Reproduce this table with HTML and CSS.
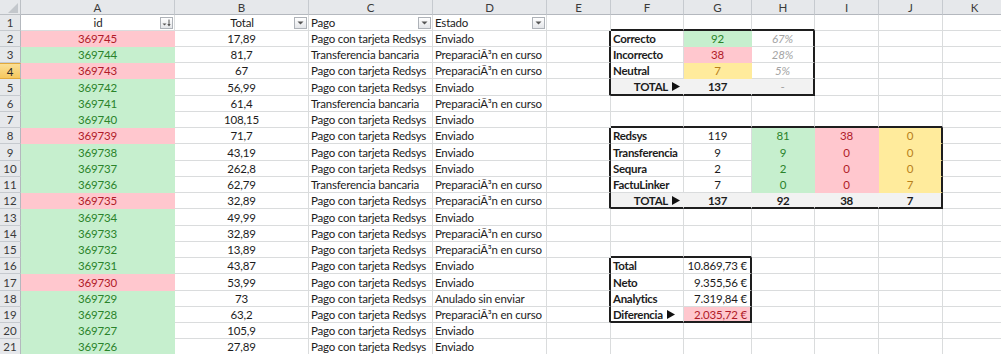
FILE: index.html
```html
<!DOCTYPE html>
<html lang="es">
<head>
<meta charset="utf-8">
<title>Hoja de pedidos</title>
<link rel="stylesheet" href="styles.css">
</head>
<body>
<div class="sheet">
  <!-- column headers -->
  <div class="c corner"><svg width="10" height="10" viewBox="0 0 10 10"><path d="M10 0V10H0Z" fill="#c3c7cc"/></svg></div>
  <div class="c ch">A</div><div class="c ch">B</div><div class="c ch">C</div><div class="c ch">D</div><div class="c ch">E</div><div class="c ch">F</div><div class="c ch">G</div><div class="c ch">H</div><div class="c ch">I</div><div class="c ch">J</div><div class="c ch">K</div>

  <!-- row 1 -->
  <div class="c rh">1</div>
  <div class="c hd"><span class="sp"></span><span class="ht">id</span><span class="fb"><svg width="11" height="10" viewBox="0 0 11 10"><path d="M1.5 5.5h4l-2 2z" fill="#555"/><path d="M8 1.5v6" stroke="#555" stroke-width="1"/><path d="M6.3 6h3.4L8 8.5z" fill="#555"/></svg></span></div>
  <div class="c hd"><span class="sp"></span><span class="ht">Total</span><span class="fb"><svg width="7" height="4" viewBox="0 0 7 4"><path d="M0.5 0.5h6L3.5 3.5z" fill="#555"/></svg></span></div>
  <div class="c hd hl"><span class="ht">Pago</span><span class="fb"><svg width="7" height="4" viewBox="0 0 7 4"><path d="M0.5 0.5h6L3.5 3.5z" fill="#555"/></svg></span></div>
  <div class="c hd hl"><span class="ht">Estado</span><span class="fb"><svg width="7" height="4" viewBox="0 0 7 4"><path d="M0.5 0.5h6L3.5 3.5z" fill="#555"/></svg></span></div>
  <div class="c"></div><div class="c xb"></div><div class="c xb"></div><div class="c xb"></div><div class="c"></div><div class="c"></div><div class="c"></div>

  <!-- row 2 -->
  <div class="c rh">2</div>
  <div class="c ctr red">369745</div><div class="c ctr">17,89</div><div class="c">Pago con tarjeta Redsys</div><div class="c">Enviado</div>
  <div class="c xr"></div><div class="c b">Correcto</div><div class="c ctr grn">92</div><div class="c ctr pct xr">67%</div><div class="c"></div><div class="c"></div><div class="c"></div>

  <!-- row 3 -->
  <div class="c rh">3</div>
  <div class="c ctr grn">369744</div><div class="c ctr">81,7</div><div class="c">Transferencia bancaria</div><div class="c">PreparaciÃ³n en curso</div>
  <div class="c xr"></div><div class="c b">Incorrecto</div><div class="c ctr red">38</div><div class="c ctr pct xr">28%</div><div class="c"></div><div class="c"></div><div class="c"></div>

  <!-- row 4 -->
  <div class="c rh sel">4</div>
  <div class="c ctr red">369743</div><div class="c ctr">67</div><div class="c">Pago con tarjeta Redsys</div><div class="c">PreparaciÃ³n en curso</div>
  <div class="c xr"></div><div class="c b">Neutral</div><div class="c ctr yel">7</div><div class="c ctr pct xr">5%</div><div class="c"></div><div class="c"></div><div class="c"></div>

  <!-- row 5 -->
  <div class="c rh">5</div>
  <div class="c ctr grn">369742</div><div class="c ctr">56,99</div><div class="c">Pago con tarjeta Redsys</div><div class="c">Enviado</div>
  <div class="c xr"></div><div class="c tot rt b xb">TOTAL<svg class="arr" width="8" height="9" viewBox="0 0 8 9"><path d="M0 0L8 4.5L0 9Z" fill="#111"/></svg></div><div class="c tot ctr b xb">137</div><div class="c tot ctr dash xb xr">-</div><div class="c"></div><div class="c"></div><div class="c"></div>

  <!-- row 6 -->
  <div class="c rh">6</div>
  <div class="c ctr grn">369741</div><div class="c ctr">61,4</div><div class="c">Transferencia bancaria</div><div class="c">PreparaciÃ³n en curso</div>
  <div class="c"></div><div class="c"></div><div class="c"></div><div class="c"></div><div class="c"></div><div class="c"></div><div class="c"></div>

  <!-- row 7 -->
  <div class="c rh">7</div>
  <div class="c ctr grn">369740</div><div class="c ctr">108,15</div><div class="c">Pago con tarjeta Redsys</div><div class="c">Enviado</div>
  <div class="c"></div><div class="c xb"></div><div class="c xb"></div><div class="c xb"></div><div class="c xb"></div><div class="c xb"></div><div class="c"></div>

  <!-- row 8 -->
  <div class="c rh">8</div>
  <div class="c ctr red">369739</div><div class="c ctr">71,7</div><div class="c">Pago con tarjeta Redsys</div><div class="c">Enviado</div>
  <div class="c xr"></div><div class="c b">Redsys</div><div class="c ctr">119</div><div class="c ctr grn">81</div><div class="c ctr red">38</div><div class="c ctr yel xr">0</div><div class="c"></div>

  <!-- row 9 -->
  <div class="c rh">9</div>
  <div class="c ctr grn">369738</div><div class="c ctr">43,19</div><div class="c">Pago con tarjeta Redsys</div><div class="c">Enviado</div>
  <div class="c xr"></div><div class="c b">Transferencia</div><div class="c ctr">9</div><div class="c ctr grn">9</div><div class="c ctr red">0</div><div class="c ctr yel xr">0</div><div class="c"></div>

  <!-- row 10 -->
  <div class="c rh">10</div>
  <div class="c ctr grn">369737</div><div class="c ctr">262,8</div><div class="c">Pago con tarjeta Redsys</div><div class="c">Enviado</div>
  <div class="c xr"></div><div class="c b">Sequra</div><div class="c ctr">2</div><div class="c ctr grn">2</div><div class="c ctr red">0</div><div class="c ctr yel xr">0</div><div class="c"></div>

  <!-- row 11 -->
  <div class="c rh">11</div>
  <div class="c ctr grn">369736</div><div class="c ctr">62,79</div><div class="c">Transferencia bancaria</div><div class="c">PreparaciÃ³n en curso</div>
  <div class="c xr"></div><div class="c b">FactuLinker</div><div class="c ctr">7</div><div class="c ctr grn">0</div><div class="c ctr red">0</div><div class="c ctr yel xr">7</div><div class="c"></div>

  <!-- row 12 -->
  <div class="c rh">12</div>
  <div class="c ctr red">369735</div><div class="c ctr">32,89</div><div class="c">Pago con tarjeta Redsys</div><div class="c">PreparaciÃ³n en curso</div>
  <div class="c xr"></div><div class="c tot rt b xb">TOTAL<svg class="arr" width="8" height="9" viewBox="0 0 8 9"><path d="M0 0L8 4.5L0 9Z" fill="#111"/></svg></div><div class="c tot ctr b xb">137</div><div class="c tot ctr b xb">92</div><div class="c tot ctr b xb">38</div><div class="c tot ctr b xb xr">7</div><div class="c"></div>

  <!-- row 13 -->
  <div class="c rh">13</div>
  <div class="c ctr grn">369734</div><div class="c ctr">49,99</div><div class="c">Pago con tarjeta Redsys</div><div class="c">Enviado</div>
  <div class="c"></div><div class="c"></div><div class="c"></div><div class="c"></div><div class="c"></div><div class="c"></div><div class="c"></div>

  <!-- row 14 -->
  <div class="c rh">14</div>
  <div class="c ctr grn">369733</div><div class="c ctr">32,89</div><div class="c">Pago con tarjeta Redsys</div><div class="c">PreparaciÃ³n en curso</div>
  <div class="c"></div><div class="c"></div><div class="c"></div><div class="c"></div><div class="c"></div><div class="c"></div><div class="c"></div>

  <!-- row 15 -->
  <div class="c rh">15</div>
  <div class="c ctr grn">369732</div><div class="c ctr">13,89</div><div class="c">Pago con tarjeta Redsys</div><div class="c">PreparaciÃ³n en curso</div>
  <div class="c"></div><div class="c xb"></div><div class="c xb"></div><div class="c"></div><div class="c"></div><div class="c"></div><div class="c"></div>

  <!-- row 16 -->
  <div class="c rh">16</div>
  <div class="c ctr grn">369731</div><div class="c ctr">43,87</div><div class="c">Pago con tarjeta Redsys</div><div class="c">Enviado</div>
  <div class="c xr"></div><div class="c b">Total</div><div class="c rt xr">10.869,73 €</div><div class="c"></div><div class="c"></div><div class="c"></div><div class="c"></div>

  <!-- row 17 -->
  <div class="c rh">17</div>
  <div class="c ctr red">369730</div><div class="c ctr">53,99</div><div class="c">Pago con tarjeta Redsys</div><div class="c">Enviado</div>
  <div class="c xr"></div><div class="c b">Neto</div><div class="c rt xr">9.355,56 €</div><div class="c"></div><div class="c"></div><div class="c"></div><div class="c"></div>

  <!-- row 18 -->
  <div class="c rh">18</div>
  <div class="c ctr grn">369729</div><div class="c ctr">73</div><div class="c">Pago con tarjeta Redsys</div><div class="c">Anulado sin enviar</div>
  <div class="c xr"></div><div class="c b">Analytics</div><div class="c rt xr">7.319,84 €</div><div class="c"></div><div class="c"></div><div class="c"></div><div class="c"></div>

  <!-- row 19 -->
  <div class="c rh">19</div>
  <div class="c ctr grn">369728</div><div class="c ctr">63,2</div><div class="c">Pago con tarjeta Redsys</div><div class="c">PreparaciÃ³n en curso</div>
  <div class="c xr"></div><div class="c b xb">Diferencia<svg class="arr" width="8" height="9" viewBox="0 0 8 9"><path d="M0 0L8 4.5L0 9Z" fill="#111"/></svg></div><div class="c rt red xr xb">2.035,72 €</div><div class="c"></div><div class="c"></div><div class="c"></div><div class="c"></div>

  <!-- row 20 -->
  <div class="c rh">20</div>
  <div class="c ctr grn">369727</div><div class="c ctr">105,9</div><div class="c">Pago con tarjeta Redsys</div><div class="c">Enviado</div>
  <div class="c"></div><div class="c"></div><div class="c"></div><div class="c"></div><div class="c"></div><div class="c"></div><div class="c"></div>

  <!-- row 21 -->
  <div class="c rh">21</div>
  <div class="c ctr grn">369726</div><div class="c ctr">27,89</div><div class="c">Pago con tarjeta Redsys</div><div class="c">Enviado</div>
  <div class="c"></div><div class="c"></div><div class="c"></div><div class="c"></div><div class="c"></div><div class="c"></div><div class="c"></div>
</div>
</body>
</html>
```

FILE: styles.css
```css
html, body {
  margin: 0;
  padding: 0;
  background: #fff;
  overflow: hidden;
}

body {
  font-family: Lato, "Open Sans", "Liberation Sans", sans-serif;
  font-size: 11.5px;
  letter-spacing: -0.2px;
  color: #1c1c1c;
}

.sheet {
  display: grid;
  width: 1007px;
  grid-template-columns: 21px 154px 134px 124px 114px 64px 73px 68px 63px 64px 64px 64px;
  grid-template-rows: 15px 16px 16px 16px 16px 17px 16px 16px 16px 17px 16px 16px 16px 17px 16px 16px 16px 17px 16px 16px 16px 16px;
}

.c {
  box-sizing: border-box;
  display: flex;
  align-items: center;
  padding: 0 2px;
  border-right: 1px solid #dadcdd;
  border-bottom: 1px solid #dadcdd;
  white-space: nowrap;
  overflow: hidden;
  min-width: 0;
}

.ctr { justify-content: center; }
.rt { justify-content: flex-end; padding-right: 3px; }
.b { font-weight: 700; letter-spacing: -0.3px; }

/* headers */
.corner {
  background: #e6e8eb;
  border-right-color: #bcc0c5;
  border-bottom-color: #bcc0c5;
  justify-content: flex-end;
  align-items: flex-end;
  padding: 0 2px 1px 0;
}

.ch {
  background: #e6e8eb;
  border-right-color: #c6cacf;
  border-bottom-color: #b4b8be;
  justify-content: center;
  color: #3a3a3a;
  letter-spacing: 0;
}

.rh {
  background: #e6e8eb;
  border-right-color: #b4b8be;
  border-bottom-color: #c6cacf;
  justify-content: center;
  color: #3a3a3a;
  padding: 0;
  letter-spacing: 0;
}

.rh.sel {
  background: linear-gradient(#fbdf96, #f6c85f);
  border-bottom-color: #e2a93c;
  border-top: 1px solid #e2a93c;
  color: #2a2a2a;
}

/* header cells with filter buttons */
.hd { padding: 0 1px 0 2px; }
.sp { width: 13px; flex: none; }
.ht { flex: 1; text-align: center; }
.hl .ht { text-align: left; }

.fb {
  box-sizing: border-box;
  flex: none;
  width: 13px;
  height: 12px;
  border: 1px solid #aeb2b8;
  background: linear-gradient(#ffffff, #e4e6e9);
  display: flex;
  align-items: center;
  justify-content: center;
}

/* conditional fills */
.red { background: #ffc7ce; color: #b01a28; border-color: #ffc7ce; }
.grn { background: #c6efce; color: #2a832a; border-color: #c6efce; }
.yel { background: #ffeb9c; color: #b8801a; border-color: #ffeb9c; }
.tot { background: #f2f2f2; border-right-color: #f2f2f2; }

.pct { font-style: italic; color: #a3a3a3; }
.dash { color: #a3a3a3; }

.arr { margin-left: 4px; flex: none; }

/* thick box borders */
.xr { border-right: 2px solid #1e1e1e; }
.xb { border-bottom: 2px solid #1e1e1e; }
```
